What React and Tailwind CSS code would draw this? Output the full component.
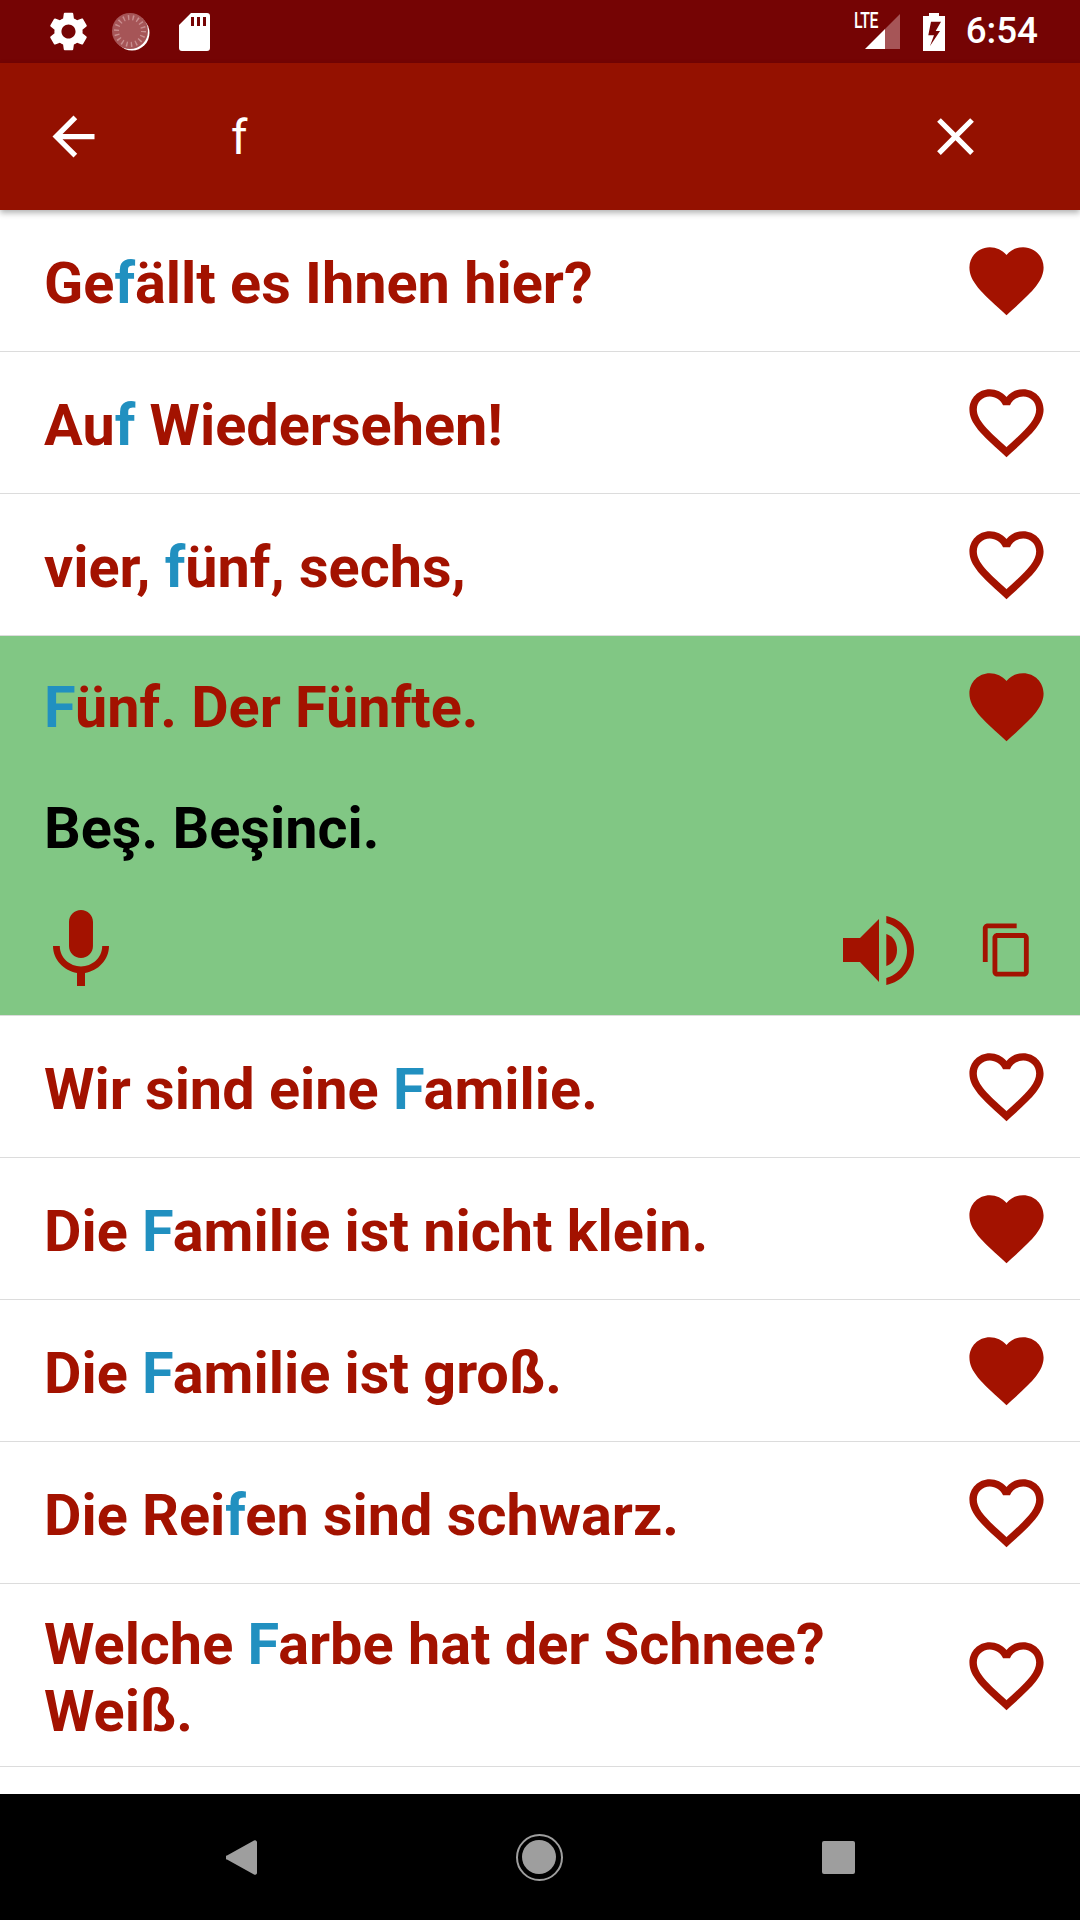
const paths = {
  heart: "M12 21.35l-1.45-1.32C5.4 15.36 2 12.28 2 8.5 2 5.42 4.42 3 7.5 3c1.74 0 3.41.81 4.5 2.09C13.09 3.81 14.76 3 16.5 3 19.58 3 22 5.42 22 8.5c0 3.78-3.4 6.86-8.55 11.54L12 21.35z",
  heartOutline: "M16.5 3c-1.74 0-3.41.81-4.5 2.09C10.91 3.81 9.24 3 7.5 3 4.42 3 2 5.42 2 8.5c0 3.78 3.4 6.86 8.55 11.54L12 21.35l1.45-1.32C18.6 15.36 22 12.28 22 8.5 22 5.42 19.58 3 16.5 3zm-4.4 15.55l-.1.1-.1-.1C7.14 14.24 4 11.39 4 8.5 4 6.5 5.5 5 7.5 5c1.54 0 3.04.99 3.57 2.36h1.87C13.46 5.99 14.96 5 16.5 5c2 0 3.5 1.5 3.5 3.5 0 2.89-3.14 5.74-7.9 10.05z",
  mic: "M12 14c1.66 0 2.99-1.34 2.99-3L15 5c0-1.66-1.34-3-3-3S9 3.34 9 5v6c0 1.66 1.34 3 3 3zm5.3-3c0 3-2.54 5.1-5.3 5.1S6.7 14 6.7 11H5c0 3.41 2.72 6.23 6 6.72V21h2v-3.28c3.28-.48 6-3.3 6-6.72h-1.7z",
  copy: "M16 1H4c-1.1 0-2 .9-2 2v14h2V3h12V1zm3 4H8c-1.1 0-2 .9-2 2v14c0 1.1.9 2 2 2h11c1.1 0 2-.9 2-2V7c0-1.1-.9-2-2-2zm0 16H8V7h11v14z",
  back: "M20 11H7.83l5.59-5.59L12 4l-8 8 8 8 1.41-1.41L7.83 13H20v-2z",
  close: "M19 6.41L17.59 5 12 10.59 6.41 5 5 6.41 10.59 12 5 17.59 6.41 19 12 13.41 17.59 19 19 17.59 13.41 12z",
  gear: "M19.14 12.94c.04-.3.06-.61.06-.94 0-.32-.02-.64-.07-.94l2.03-1.58c.18-.14.23-.41.12-.61l-1.92-3.32c-.12-.22-.37-.29-.59-.22l-2.39.96c-.5-.38-1.03-.7-1.62-.94l-.36-2.54c-.04-.24-.24-.41-.48-.41h-3.84c-.24 0-.43.17-.47.41l-.36 2.54c-.59.24-1.13.57-1.62.94l-2.39-.96c-.22-.08-.47 0-.59.22L2.74 8.87c-.12.21-.08.47.12.61l2.03 1.58c-.05.3-.09.63-.09.94s.02.64.07.94l-2.03 1.58c-.18.14-.23.41-.12.61l1.92 3.32c.12.22.37.29.59.22l2.39-.96c.5.38 1.03.7 1.62.94l.36 2.54c.05.24.24.41.48.41h3.84c.24 0 .44-.17.47-.41l.36-2.54c.59-.24 1.13-.56 1.62-.94l2.39.96c.22.08.47 0 .59-.22l1.92-3.32c.12-.22.07-.47-.12-.61l-2.01-1.58zM12 15.6c-1.98 0-3.6-1.62-3.6-3.6s1.62-3.6 3.6-3.6 3.6 1.62 3.6 3.6-1.62 3.6-3.6 3.6z",
};

function Icon({ d, className }) {
  return (
    <svg viewBox="0 0 24 24" fill="currentColor" className={className}>
      <path d={d} />
    </svg>
  );
}

function Phrase({ before, hit, after, className = "" }) {
  return (
    <p className={`text-[57.6px] font-bold leading-[67px] text-[#a31200] ${className}`}>
      {before}
      <span className="text-[#2190c0]">{hit}</span>
      {after}
    </p>
  );
}

function Row({ before, hit, after, liked, tall }) {
  return (
    <div
      className={`flex items-center justify-between border-b-[1.5px] border-[#dcdcdc] pl-[44px] pr-[29px] ${
        tall ? "h-[183px]" : "h-[142px]"
      }`}
    >
      <Phrase before={before} hit={hit} after={after} className="pt-[5px]" />
      <Icon
        d={liked ? paths.heart : paths.heartOutline}
        className="h-[89px] w-[89px] shrink-0 text-[#a31200]"
      />
    </div>
  );
}

function Speaker() {
  return (
    <svg viewBox="0 0 71 69" fill="currentColor" className="h-[69px] w-[71px]">
      <path d="M0 22H17L36 3V66L17 46H0Z" />
      <path d="M43.3 18C50 20 54 26 54 34C54 42 50 48 43.3 50Z" />
      <path d="M43.3 0C59 3 71 17 71 34.5C71 52 59 66 43.3 69V62C55 59 64 48 64 34.5C64 21 55 10 43.3 7Z" />
    </svg>
  );
}

function StatusBar() {
  return (
    <div className="flex h-[63px] shrink-0 items-center bg-[#750404] pl-[45px] pr-[42px] text-white">
      <Icon d={paths.gear} className="h-[47px] w-[47px]" />
      <svg viewBox="0 0 38 38" className="ml-[20px] h-[38px] w-[38px]">
        <circle cx="20" cy="20" r="17.5" fill="#fff" />
        <circle cx="18" cy="18" r="18" fill="#a65557" />
        <circle cx="18" cy="18" r="13.5" fill="none" stroke="#c98f90" strokeWidth="5" strokeDasharray="1.4 3.3" />
      </svg>
      <svg viewBox="0 0 31 38" fill="currentColor" className="ml-[29px] h-[38px] w-[31px]">
        <path d="M12 0H28A3 3 0 0 1 31 3V35A3 3 0 0 1 28 38H3A3 3 0 0 1 0 35V12ZM12 4V13H15V4ZM18 4V13H21V4ZM24 4V13H27V4Z" fillRule="evenodd" />
      </svg>
      <div className="relative ml-auto h-[35px] w-[35px]">
        <span className="absolute left-[-11px] top-[-4px] origin-left scale-x-[0.72] text-[22px] font-medium leading-[22px] tracking-[-0.5px]">
          LTE
        </span>
        <svg viewBox="0 0 35 35" className="h-[35px] w-[35px]">
          <path d="M35 0V35H20V15Z" fill="#a65557" />
          <path d="M0 35L20 15V35Z" fill="#fff" />
        </svg>
      </div>
      <svg viewBox="0 0 22 38" fill="currentColor" className="ml-[23px] h-[38px] w-[22px]">
        <path
          fillRule="evenodd"
          d="M6 0H16V3H22V38H0V3H6ZM8 8.7H18L12.7 18H17L7 33L11 22.3H5.3Z"
        />
      </svg>
      <span className="ml-[21px] text-[36.75px] font-medium leading-none">6:54</span>
    </div>
  );
}

function Toolbar() {
  return (
    <div className="relative z-10 flex h-[147px] shrink-0 items-center bg-[#941100] pl-[42px] pr-[93px] text-white shadow-[0_3px_6px_rgba(0,0,0,0.3)]">
      <Icon d={paths.back} className="h-[63px] w-[63px]" />
      <span className="ml-[126px] pt-[5px] text-[47.25px] leading-none">f</span>
      <Icon d={paths.close} className="ml-auto h-[63px] w-[63px]" />
    </div>
  );
}

function OpenRow() {
  return (
    <div className="flex h-[380px] flex-col border-b-[1.5px] border-[#dcdcdc] bg-[#81c784] pl-[44px] pr-[29px]">
      <div className="flex h-[142px] items-center justify-between">
        <Phrase before="" hit="F" after="ünf. Der Fünfte." />
        <Icon d={paths.heart} className="mt-[-2px] h-[89px] w-[89px] text-[#a31200]" />
      </div>
      <p className="mt-[17px] text-[57.6px] font-bold leading-[67px] text-black">Beş. Beşinci.</p>
      <div className="mt-[40px] flex items-center text-[#a31200]">
        <Icon d={paths.mic} className="ml-[-11px] h-[96px] w-[96px]" />
        <div className="ml-auto">
          <Speaker />
        </div>
        <Icon d={paths.copy} className="ml-[64px] mr-[15px] h-[58px] w-[58px]" />
      </div>
    </div>
  );
}

function NavBar() {
  return (
    <div className="flex h-[126px] shrink-0 items-center justify-center gap-[259px] bg-black">
      <svg viewBox="0 0 31 35" fill="#9e9e9e" className="h-[35px] w-[31px]">
        <path d="M1 15.5L28 .5A2 2 0 0 1 31 2V33A2 2 0 0 1 28 34.5L1 19.5A2 2 0 0 1 1 15.5Z" />
      </svg>
      <div className="flex h-[47px] w-[47px] items-center justify-center rounded-full border-2 border-[#9e9e9e]">
        <div className="h-[34px] w-[34px] rounded-full bg-[#9e9e9e]" />
      </div>
      <div className="h-[33px] w-[33px] rounded-[2px] bg-[#9e9e9e]" />
    </div>
  );
}

export default function App() {
  return (
    <div className="flex h-[1920px] w-[1080px] flex-col overflow-hidden bg-white font-['Roboto',sans-serif]">
      <StatusBar />
      <Toolbar />
      <div className="flex-1">
        <Row before="Ge" hit="f" after="ällt es Ihnen hier?" liked />
        <Row before="Au" hit="f" after=" Wiedersehen!" />
        <Row before="vier, " hit="f" after="ünf, sechs," />
        <OpenRow />
        <Row before="Wir sind eine " hit="F" after="amilie." />
        <Row before="Die " hit="F" after="amilie ist nicht klein." liked />
        <Row before="Die " hit="F" after="amilie ist groß." liked />
        <Row before="Die Rei" hit="f" after="en sind schwarz." />
        <Row
          before="Welche "
          hit="F"
          after={
            <>
              arbe hat der Schnee?
              <br />
              Weiß.
            </>
          }
          tall
        />
      </div>
      <NavBar />
    </div>
  );
}
